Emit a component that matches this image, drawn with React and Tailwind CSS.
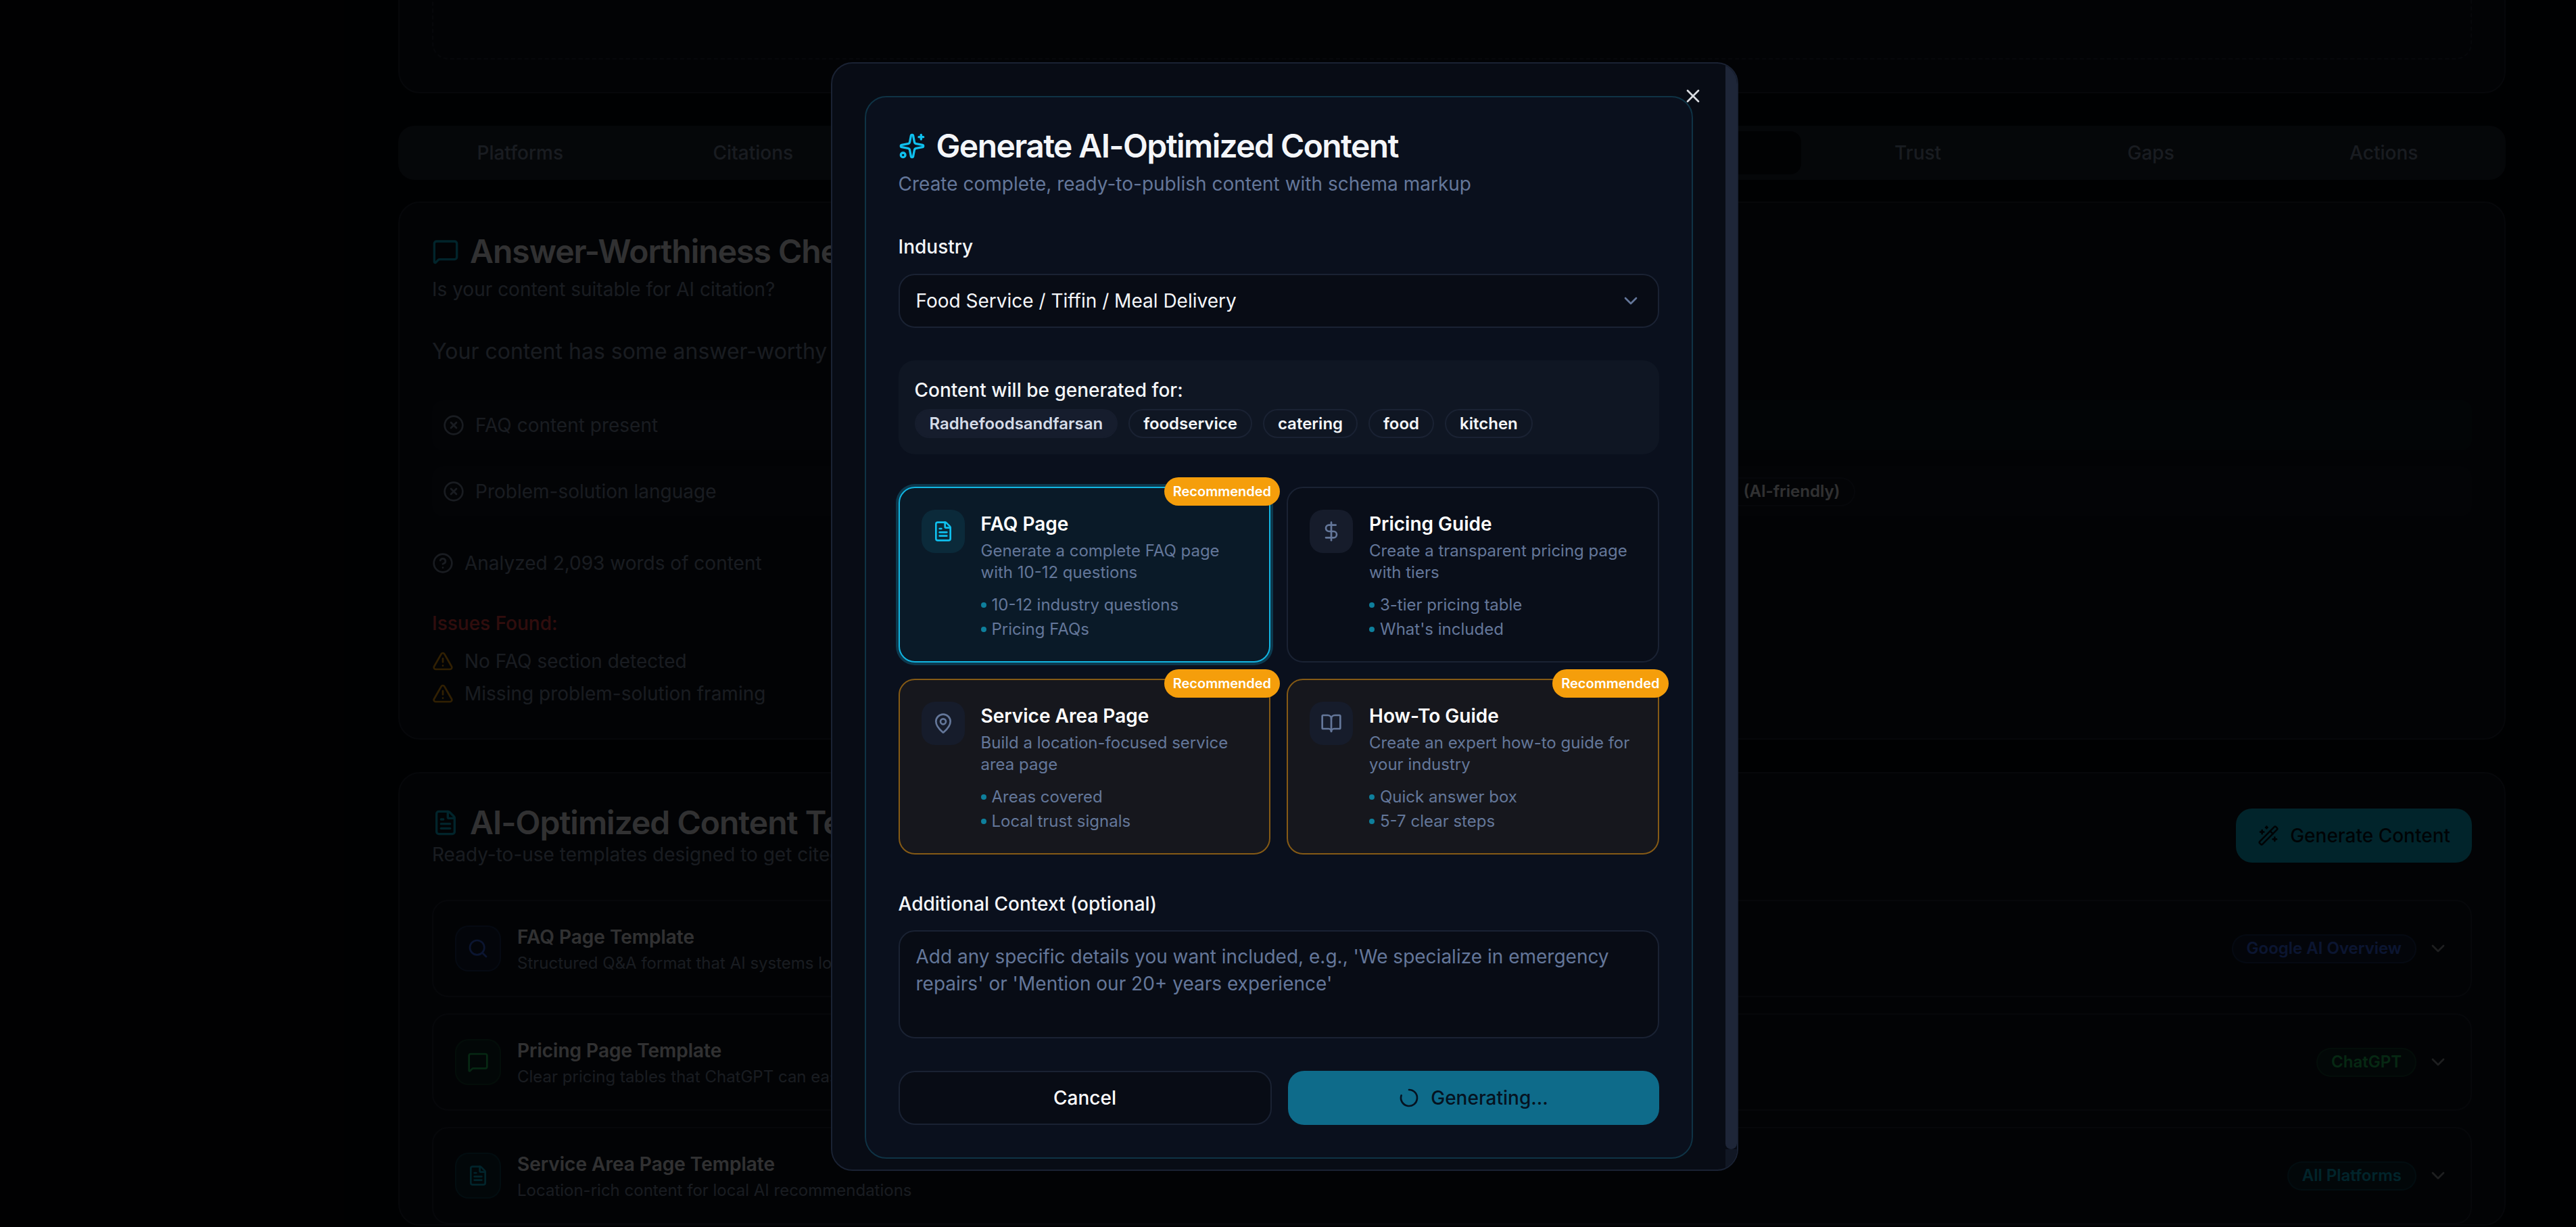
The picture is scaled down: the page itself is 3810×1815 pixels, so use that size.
import React from "react";
import {
  Sparkles, FileText, DollarSign, MapPin, BookOpen, ChevronDown, X, LoaderCircle,
  MessageSquare, CircleX, CircleHelp, TriangleAlert, Search, WandSparkles,
} from "lucide-react";

const tabs = [
  { label: "Platforms" },
  { label: "Citations" },
  { label: "" },
  { label: "" },
  { label: "" },
  { label: "", active: true },
  { label: "Trust" },
  { label: "Gaps" },
  { label: "Actions" },
];

const templates = [
  {
    title: "FAQ Page Template",
    desc: "Structured Q&A format that AI systems love to cite",
    Icon: Search,
    tile: "bg-[#3b82f6]/10 border-[#3b82f6]/20 text-[#3b6cf6]",
    badge: "Google AI Overview",
    badgeCls: "bg-[#3b82f6]/10 border-[#3b82f6]/20 text-[#3b6cf6]",
  },
  {
    title: "Pricing Page Template",
    desc: "Clear pricing tables that ChatGPT can easily extract",
    Icon: MessageSquare,
    tile: "bg-[#22c55e]/10 border-[#22c55e]/20 text-[#22c55e]",
    badge: "ChatGPT",
    badgeCls: "bg-[#22c55e]/10 border-[#22c55e]/20 text-[#22c55e]",
  },
  {
    title: "Service Area Page Template",
    desc: "Location-rich content for local AI recommendations",
    Icon: FileText,
    tile: "bg-[#06b6d4]/10 border-[#06b6d4]/20 text-[#06b6d4]",
    badge: "All Platforms",
    badgeCls: "bg-[#06b6d4]/10 border-[#06b6d4]/20 text-[#06b6d4]",
  },
];

const contentTypes = [
  {
    title: "FAQ Page",
    desc: "Generate a complete FAQ page with 10-12 questions",
    items: ["10-12 industry questions", "Pricing FAQs"],
    Icon: FileText,
    recommended: true,
    card: "border-[#12b5e2] bg-[#0a1a28] ring-2 ring-[#12b5e2]/25",
    tile: "bg-[#0b2a3a] text-[#0fc0ee]",
  },
  {
    title: "Pricing Guide",
    desc: "Create a transparent pricing page with tiers",
    items: ["3-tier pricing table", "What's included"],
    Icon: DollarSign,
    recommended: false,
    card: "border-[#1a2233] bg-[#090e19]",
    tile: "bg-[#161c2b] text-[#64779a]",
  },
  {
    title: "Service Area Page",
    desc: "Build a location-focused service area page",
    items: ["Areas covered", "Local trust signals"],
    Icon: MapPin,
    recommended: true,
    card: "border-[#855a15] bg-[#16171d]",
    tile: "bg-[#161c2b] text-[#64779a]",
  },
  {
    title: "How-To Guide",
    desc: "Create an expert how-to guide for your industry",
    items: ["Quick answer box", "5-7 clear steps"],
    Icon: BookOpen,
    recommended: true,
    card: "border-[#855a15] bg-[#16171d]",
    tile: "bg-[#161c2b] text-[#64779a]",
  },
];

const chips = ["foodservice", "catering", "food", "kitchen"];

function CheckRow({ label }) {
  return (
    <div className="flex h-[37px] items-center gap-2 rounded-lg bg-[#0f1420] p-2">
      <CircleX className="h-4 w-4 shrink-0 text-[#7f8da3]" />
      <span className="text-sm text-[#7f8da3]">{label}</span>
    </div>
  );
}

function Background() {
  return (
    <div className="-mt-10 pl-[294.5px] pr-[52px]">
      <div className="h-[109px] rounded-2xl border border-[#1e2533] bg-[#0d121d] p-6">
        <div className="h-full rounded-xl border border-dashed border-[#1e2533]" />
      </div>

      <div className="mt-6 grid h-10 grid-cols-9 rounded-xl bg-[#1c2330] p-1">
        {tabs.map((t, i) => (
          <div
            key={i}
            className={`flex items-center justify-center rounded-lg text-sm font-medium text-[#7f8da3] ${t.active ? "bg-[#080b12]" : ""}`}
          >
            {t.label}
          </div>
        ))}
      </div>

      <div className="mt-4 h-[398px] rounded-2xl border border-[#1e2533] bg-[#0d121d] px-6 pb-6 pt-[22px]">
        <div className="flex items-center gap-2">
          <MessageSquare className="h-5 w-5 text-[#06b6d4]" />
          <h2 className="text-2xl font-semibold leading-7 tracking-[-0.5px] text-[#f4f6f9]">Answer-Worthiness Check</h2>
        </div>
        <p className="mt-1 text-sm text-[#7f8da3]">Is your content suitable for AI citation?</p>
        <p className="mt-6 text-base text-[#7f8da3]">Your content has some answer-worthy elements, but could be improved.</p>

        <div className="mt-6 grid grid-cols-2 gap-3">
          <CheckRow label="FAQ content present" />
          <div className="h-[37px] rounded-lg bg-[#22c55e]/5" />
          <CheckRow label="Problem-solution language" />
          <div className="flex h-[37px] items-center rounded-lg bg-[#0f1420] pl-10">
            <span className="flex h-[21.5px] w-[252px] items-center justify-end rounded-full border border-[#1e2533] pr-2.5 text-xs font-semibold text-[#f4f6f9]">
              (AI-friendly)
            </span>
          </div>
        </div>

        <div className="mt-[24.5px] flex items-center gap-2 text-sm text-[#7f8da3]">
          <CircleHelp className="h-4 w-4" />
          Analyzed 2,093 words of content
        </div>
        <p className="mt-[24.5px] text-sm font-medium text-[#ef4444]">Issues Found:</p>
        <div className="mt-2 flex flex-col gap-1 text-sm text-[#7f8da3]">
          <div className="flex h-5 items-center gap-2">
            <TriangleAlert className="h-4 w-4 text-[#f59e0b]" />
            No FAQ section detected
          </div>
          <div className="flex h-5 items-center gap-2">
            <TriangleAlert className="h-4 w-4 text-[#f59e0b]" />
            Missing problem-solution framing
          </div>
        </div>
      </div>

      <div className="mt-6 rounded-2xl border border-[#1e2533] bg-[#0d121d] px-6 pt-[22.5px]">
        <div className="flex items-center justify-between">
          <div>
            <div className="flex items-center gap-2">
              <FileText className="h-5 w-5 text-[#06b6d4]" />
              <h2 className="text-2xl font-semibold leading-7 tracking-[-0.5px] text-[#f4f6f9]">AI-Optimized Content Templates</h2>
            </div>
            <p className="text-sm leading-[19px] text-[#7f8da3]">Ready-to-use templates designed to get cited by AI</p>
          </div>
          <button className="flex h-10 items-center gap-2 rounded-xl bg-[#06b6d4] px-4 text-sm font-medium text-[#04121c]">
            <WandSparkles className="h-4 w-4" />
            Generate Content
          </button>
        </div>

        <div className="mt-6 flex flex-col gap-3">
          {templates.map(({ title, desc, Icon, tile, badge, badgeCls }) => (
            <div key={title} className="flex h-[72px] items-center justify-between rounded-xl border border-[#1e2533] p-4">
              <div className="flex items-center gap-3">
                <div className={`flex h-[34px] w-[34px] items-center justify-center rounded-[10px] border ${tile}`}>
                  <Icon className="h-4 w-4" />
                </div>
                <div>
                  <p className="text-sm font-semibold text-[#f4f6f9]">{title}</p>
                  <p className="mt-[1.5px] text-xs text-[#7f8da3]">{desc}</p>
                </div>
              </div>
              <div className="flex items-center gap-2">
                <span className={`flex h-[21.5px] items-center rounded-full border px-2.5 text-xs font-semibold ${badgeCls}`}>{badge}</span>
                <ChevronDown className="h-4 w-4 text-[#f4f6f9]/60" />
              </div>
            </div>
          ))}
        </div>
      </div>
    </div>
  );
}

function TypeCard({ title, desc, items, Icon, recommended, card, tile }) {
  return (
    <div className={`relative h-[130px] rounded-xl border p-4 ${card}`}>
      {recommended && (
        <span className="absolute -right-[8px] -top-[8px] flex h-[21px] items-center rounded-full bg-[#f59e0b] px-[6.5px] text-[10px] font-semibold text-white">
          Recommended
        </span>
      )}
      <div className="flex gap-3">
        <div className={`flex h-8 w-8 shrink-0 items-center justify-center rounded-[10px] ${tile}`}>
          <Icon className="h-4 w-4" />
        </div>
        <div className="mt-[0.5px]">
          <p className="text-sm font-semibold text-white">{title}</p>
          <p className="mt-0.5 text-xs text-[#64779a]">{desc}</p>
          <ul className="mt-2 flex flex-col gap-0.5">
            {items.map((it) => (
              <li key={it} className="flex items-center gap-1 text-xs text-[#64779a]">
                <span className="h-1 w-1 rounded-full bg-[#0e7f9c]" />
                {it}
              </li>
            ))}
          </ul>
        </div>
      </div>
    </div>
  );
}

function Modal() {
  return (
    <div className="absolute left-[614.25px] top-[46px] flex h-[820px] w-[671px] overflow-hidden rounded-2xl border border-[#1a2233] bg-[#080c15]">
      <div className="flex-1 pl-6 pr-6 pt-6">
        <div className="relative rounded-2xl border border-[#0f3345] bg-[#0a101d] p-6">
          <button className="absolute -right-[9px] -top-[9px] text-[#d8dbe0]">
            <X className="h-4 w-4" />
          </button>

          <div className="flex items-center gap-2">
            <Sparkles className="h-5 w-5 text-[#0fc0ee]" />
            <h2 className="text-2xl font-semibold leading-6 tracking-[-0.8px] text-[#f4f6f9]">Generate AI-Optimized Content</h2>
          </div>
          <p className="mt-1.5 text-sm text-[#64779a]">Create complete, ready-to-publish content with schema markup</p>

          <p className="mt-[26.5px] text-sm font-medium text-[#f4f6f9]">Industry</p>
          <div className="mt-2.5 flex h-10 items-center justify-between rounded-xl border border-[#1a2233] bg-[#080c15] px-3 text-sm text-[#f4f6f9]">
            Food Service / Tiffin / Meal Delivery
            <ChevronDown className="h-4 w-4 text-[#64779a]" />
          </div>

          <div className="mt-6 rounded-xl bg-[#0f1623] p-3">
            <p className="text-sm font-medium text-[#f4f6f9]">Content will be generated for:</p>
            <div className="mt-1 flex gap-2">
              <span className="flex h-[21.5px] items-center rounded-full border border-[#161d2d] bg-[#161d2d] px-2.5 text-xs font-semibold text-[#d5dce8]">
                Radhefoodsandfarsan
              </span>
              {chips.map((c) => (
                <span key={c} className="flex h-[21.5px] items-center rounded-full border border-[#1a2233] px-2.5 text-xs font-semibold text-[#f4f6f9]">
                  {c}
                </span>
              ))}
            </div>
          </div>

          <div className="mt-6 grid grid-cols-2 gap-3">
            {contentTypes.map((c) => (
              <TypeCard key={c.title} {...c} />
            ))}
          </div>

          <p className="mt-[26.5px] text-sm font-medium text-[#f4f6f9]">Additional Context (optional)</p>
          <textarea
            readOnly
            className="mt-[9.5px] block h-20 w-full resize-none rounded-xl border border-[#1a2233] bg-[#080c15] px-3 pb-2 pt-[8.5px] text-sm text-[#f4f6f9] outline-none placeholder:text-[#64779a]"
            placeholder="Add any specific details you want included, e.g., 'We specialize in emergency repairs' or 'Mention our 20+ years experience'"
          />

          <div className="mt-6 grid grid-cols-[276px_1fr] gap-3">
            <button className="h-10 rounded-xl border border-[#1a2233] bg-[#080c15] text-sm font-medium text-white">Cancel</button>
            <button className="flex h-10 items-center justify-center gap-2 rounded-xl bg-[#0e6b8a] text-sm font-medium text-[#051220]">
              <LoaderCircle className="h-4 w-4 rotate-[270deg]" />
              Generating...
            </button>
          </div>
        </div>
      </div>
      <div className="flex w-[8.5px] flex-col">
        <div className="h-[803px] rounded-b-full rounded-t-md bg-[#1e2638]" />
        <div className="flex-1 bg-[#111724]" />
      </div>
    </div>
  );
}

export default function App() {
  return (
    <div className="relative h-[907.5px] w-[1905px] overflow-hidden bg-[#03050a] [font-family:Inter,sans-serif] [zoom:2]">
      <Background />
      <div className="absolute inset-0 bg-black/80" />
      <Modal />
    </div>
  );
}
